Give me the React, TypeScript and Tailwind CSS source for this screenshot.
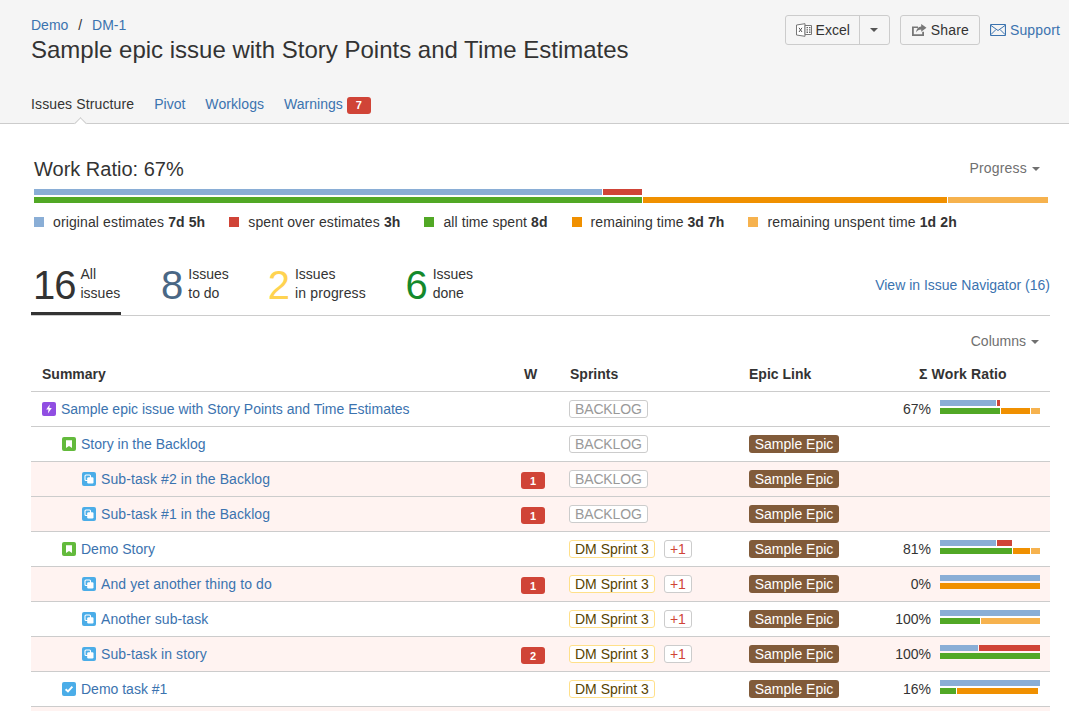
import type { ReactNode } from "react";

type Seg = { w: number; c: string };

const BLUE = "bg-[#8aaed6]";
const RED = "bg-[#d04437]";
const GREEN = "bg-[#51a825]";
const ORANGE = "bg-[#f09000]";
const LIGHT = "bg-[#f6b24e]";

type Row = {
  title: string;
  level: number;
  icon: "epic" | "story" | "subtask" | "task";
  warn?: number;
  sprint?: "backlog" | "dm" | "dm+";
  epic?: boolean;
  pct?: string;
  top?: Seg[];
  bottom?: Seg[];
};

const rows: Row[] = [
  {
    title: "Sample epic issue with Story Points and Time Estimates",
    level: 0,
    icon: "epic",
    sprint: "backlog",
    pct: "67%",
    top: [{ w: 56, c: BLUE }, { w: 3, c: RED }],
    bottom: [{ w: 60, c: GREEN }, { w: 29, c: ORANGE }, { w: 9, c: LIGHT }],
  },
  { title: "Story in the Backlog", level: 1, icon: "story", sprint: "backlog", epic: true },
  { title: "Sub-task #2 in the Backlog", level: 2, icon: "subtask", warn: 1, sprint: "backlog", epic: true },
  { title: "Sub-task #1 in the Backlog", level: 2, icon: "subtask", warn: 1, sprint: "backlog", epic: true },
  {
    title: "Demo Story",
    level: 1,
    icon: "story",
    sprint: "dm+",
    epic: true,
    pct: "81%",
    top: [{ w: 56, c: BLUE }, { w: 15, c: RED }],
    bottom: [{ w: 72, c: GREEN }, { w: 17, c: ORANGE }, { w: 9, c: LIGHT }],
  },
  {
    title: "And yet another thing to do",
    level: 2,
    icon: "subtask",
    warn: 1,
    sprint: "dm+",
    epic: true,
    pct: "0%",
    top: [{ w: 100, c: BLUE }],
    bottom: [{ w: 100, c: ORANGE }],
  },
  {
    title: "Another sub-task",
    level: 2,
    icon: "subtask",
    sprint: "dm+",
    epic: true,
    pct: "100%",
    top: [{ w: 100, c: BLUE }],
    bottom: [{ w: 40, c: GREEN }, { w: 59, c: LIGHT }],
  },
  {
    title: "Sub-task in story",
    level: 2,
    icon: "subtask",
    warn: 2,
    sprint: "dm+",
    epic: true,
    pct: "100%",
    top: [{ w: 38, c: BLUE }, { w: 61, c: RED }],
    bottom: [{ w: 100, c: GREEN }],
  },
  {
    title: "Demo task #1",
    level: 1,
    icon: "task",
    sprint: "dm",
    epic: true,
    pct: "16%",
    top: [{ w: 100, c: BLUE }],
    bottom: [{ w: 16, c: GREEN }, { w: 81, c: ORANGE }],
  },
];

function IssueIcon({ type }: { type: Row["icon"] }) {
  if (type === "epic") {
    return (
      <svg width="14" height="14" viewBox="0 0 14 14" className="shrink-0">
        <rect width="14" height="14" rx="2" fill="#904ee2" />
        <path d="M7.8 2.5 4.2 7.6h2.3L5.9 11.5l3.9-5.4H7.3z" fill="#fff" />
      </svg>
    );
  }
  if (type === "story") {
    return (
      <svg width="14" height="14" viewBox="0 0 14 14" className="shrink-0">
        <rect width="14" height="14" rx="2" fill="#63ba3c" />
        <path d="M4 3.2h6v7.8L7 8.9 4 11z" fill="#fff" />
      </svg>
    );
  }
  if (type === "task") {
    return (
      <svg width="14" height="14" viewBox="0 0 14 14" className="shrink-0">
        <rect width="14" height="14" rx="2" fill="#4bade8" />
        <path d="m3.6 7.2 2.4 2.3 4.4-4.8" fill="none" stroke="#fff" strokeWidth="1.9" />
      </svg>
    );
  }
  return (
    <svg width="14" height="14" viewBox="0 0 14 14" className="shrink-0">
      <rect width="14" height="14" rx="2" fill="#4bade8" />
      <rect x="3" y="3" width="5.5" height="5.5" rx="1" fill="none" stroke="#fff" strokeWidth="1.1" />
      <rect x="5.2" y="5.2" width="6.3" height="6.3" rx="1.2" fill="#fff" />
    </svg>
  );
}

function Bar({ segs, last }: { segs: Seg[]; last?: boolean }) {
  return (
    <div className={last ? "flex h-[6px] gap-px" : "flex h-[6px] gap-px mb-[2px]"}>
      {segs.map((s, i) => (
        <div key={i} className={`h-full ${s.c}`} style={{ width: s.w }} />
      ))}
    </div>
  );
}

function Sprint({ kind }: { kind: NonNullable<Row["sprint"]> }) {
  if (kind === "backlog") {
    return (
      <span className="h-[18px] px-[5px] flex items-center border border-[#cccccc] rounded-[3px] text-[#999999] bg-white tracking-[-0.15px]">
        BACKLOG
      </span>
    );
  }
  return (
    <>
      <span className="h-[18px] px-[5px] flex items-center border border-[#ffe08a] rounded-[3px] text-[#594300] bg-white">
        DM Sprint 3
      </span>
      {kind === "dm+" && (
        <span className="ml-[9px] h-[18px] px-[5px] flex items-center border border-[#cccccc] rounded-[3px] text-[#d04437] bg-white">
          +1
        </span>
      )}
    </>
  );
}

function TableRow({ row }: { row: Row }) {
  return (
    <div className={`h-[35px] flex items-center border-b border-[#cccccc] ${row.warn ? "bg-[#fff3f1]" : ""}`}>
      <div
        className={`w-[490px] shrink-0 flex items-center gap-[5px] text-[#3b73af] ${row.level === 2 ? "tracking-[0.1px]" : ""}`}
        style={{ paddingLeft: 11 + row.level * 20 }}
      >
        <IssueIcon type={row.icon} />
        <span>{row.title}</span>
      </div>
      <div className="w-[48px] shrink-0 flex justify-start">
        {row.warn && (
          <span className="mt-[3px] w-6 h-[17px] flex items-center justify-center rounded-[3px] bg-[#d04437] text-white text-[11px] font-bold">
            {row.warn}
          </span>
        )}
      </div>
      <div className="w-[180px] shrink-0 flex items-center">{row.sprint && <Sprint kind={row.sprint} />}</div>
      <div className="w-[142px] shrink-0">
        {row.epic && (
          <span className="inline-flex h-[18px] w-[90px] items-center justify-center rounded-[3px] bg-[#815b3a] text-white">
            Sample Epic
          </span>
        )}
      </div>
      <div className="w-[40px] shrink-0 text-right text-[#333333]">{row.pct}</div>
      <div className="w-[100px] ml-[9px] shrink-0 pb-[4px]">
        {row.top && <Bar segs={row.top} />}
        {row.bottom && <Bar segs={row.bottom} last />}
      </div>
    </div>
  );
}

function Legend({ color, label, value, tight }: { color: string; label: string; value: string; tight?: boolean }) {
  return (
    <div className="flex items-center mr-[24px]">
      <span className={`w-[10px] h-[10px] mr-[9px] ${color}`} />
      <span className={tight ? "tracking-[0.08px]" : "tracking-[0.12px]"}>
        {label} <b>{value}</b>
      </span>
    </div>
  );
}

function Stat({
  num,
  color,
  children,
  active,
  className = "mr-[40px]",
}: {
  num: string;
  color: string;
  children: ReactNode;
  active?: boolean;
  className?: string;
}) {
  return (
    <div className={`h-[62px] pt-[10px] flex items-start ${className} ${active ? "border-b-[3px] border-[#333333] w-[90px] pl-[2px]" : ""}`}>
      <span className={`text-[40px] leading-[52px] mt-[-4px] ${color} ${active ? "tracking-[-1px]" : ""}`}>{num}</span>
      <span className="leading-[19px] text-[14px] text-[#333333] mt-[2px] ml-[5px]">{children}</span>
    </div>
  );
}

function Caret() {
  return <span className="inline-block ml-[5px] align-middle border-x-[4px] border-t-[4px] border-x-transparent border-t-current" />;
}

export default function App() {
  return (
    <div className="h-[711px] overflow-hidden bg-white text-[14px] leading-[20px] text-[#333333] font-['Liberation_Sans',Arial,sans-serif]">
      <header className="relative h-[124px] bg-[#f5f5f5] border-b border-[#cccccc] pl-[31px] pr-[9px]">
        <div className="flex justify-between">
          <div className="pt-[15px]">
            <div className="text-[#3b73af] leading-[20px]">
              Demo <span className="text-[#333333] mx-[6px]">/</span> DM-1
            </div>
            <h1 className="text-[24px] leading-[30px] font-normal">Sample epic issue with Story Points and Time Estimates</h1>
          </div>
          <div className="flex items-center pt-[15px] h-[45px]">
            <div className="flex h-[30px] border border-[#cccccc] rounded-[3px] mr-[10px]">
              <button className="flex items-center gap-[4px] pl-[10px] pr-[9px] border-r border-[#cccccc]">
                <svg width="16" height="14" viewBox="0 0 16 14">
                  <path d="M.5 2 9 .7v12.6L.5 12z" fill="#fff" stroke="#777" />
                  <path d="M3 4.8 6 9M6 4.8 3 9" stroke="#555" fill="none" />
                  <path d="M9 2.5h6.5v9H9z" fill="#fff" stroke="#777" />
                  <path d="M10.5 4h1.5v1.3h-1.5zM13 4h1.5v1.3H13zM10.5 6.3h1.5v1.3h-1.5zM13 6.3h1.5v1.3H13zM10.5 8.6h1.5v1.3h-1.5zM13 8.6h1.5v1.3H13z" fill="#666" />
                </svg>
                Excel
              </button>
              <button className="w-[29px] flex items-center justify-center text-[#555555]">
                <span className="inline-block border-x-[4px] border-t-[4px] border-x-transparent border-t-current" />
              </button>
            </div>
            <button className="flex h-[30px] items-center gap-[4px] px-[10px] border border-[#cccccc] rounded-[3px] mr-[10px] tracking-[0.15px]">
              <svg width="16" height="14" viewBox="0 0 16 14">
                <path d="M1 3.5h6v1.6H2.8v6.2h8.4V8.7H13V13H1z" fill="#777" />
                <path d="M10.2 1 15.5 4.8l-5.3 3.9V6.4C8 6.4 6.2 7.4 5 9.6c.3-3.4 2.2-5.7 5.2-6z" fill="#777" />
              </svg>
              Share
            </button>
            <a className="flex items-center gap-[4px] text-[#3b73af] tracking-[0.15px]">
              <svg width="16" height="12" viewBox="0 0 16 12" fill="none" stroke="#3b73af">
                <rect x=".5" y=".5" width="15" height="11" rx="1" strokeWidth="1.2" />
                <path d="m1 1.5 7 5 7-5M1 10.5 6 5.5M15 10.5l-5-5" />
              </svg>
              Support
            </a>
          </div>
        </div>
        <nav className="flex gap-[20px] mt-[29px] items-center">
          <span className="tracking-[0.13px]">Issues Structure</span>
          <span className="text-[#3b73af]">Pivot</span>
          <span className="text-[#3b73af] tracking-[0.08px]">Worklogs</span>
          <span className="text-[#3b73af] flex items-center gap-[4px]">
            Warnings
            <span className="mt-[2px] w-6 h-[17px] flex items-center justify-center rounded-[3px] bg-[#d04437] text-white text-[11px] font-bold">7</span>
          </span>
        </nav>
        <span className="absolute left-[76px] bottom-[-5px] w-[9px] h-[9px] bg-white border-l border-t border-[#cccccc] rotate-45" />
      </header>

      <main className="pl-[31px] pr-[19px]">
        <div className="flex justify-between items-center pt-[25px] pl-[3px] pr-[10px] h-[65px]">
          <span className="text-[20px] leading-[28px]">Work Ratio: 67%</span>
          <span className="text-[#707070] tracking-[0.2px] mt-[-2px]">
            Progress
            <Caret />
          </span>
        </div>
        <div className="ml-[3px] mr-[2px]">
          <div className="flex h-[6px] gap-px mb-[2px]">
            <div className={`w-[568px] ${BLUE}`} />
            <div className={`w-[39px] ${RED}`} />
          </div>
          <div className="flex h-[6px] gap-px">
            <div className={`w-[608px] ${GREEN}`} />
            <div className={`w-[304px] ${ORANGE}`} />
            <div className={`w-[100px] ${LIGHT}`} />
          </div>
        </div>
        <div className="flex ml-[3px] mt-[9px] h-[20px]">
          <Legend color={BLUE} label="original estimates" value="7d 5h" />
          <Legend color={RED} label="spent over estimates" value="3h" />
          <Legend color={GREEN} label="all time spent" value="8d" tight />
          <Legend color={ORANGE} label="remaining time" value="3d 7h" tight />
          <Legend color={LIGHT} label="remaining unspent time" value="1d 2h" />
        </div>

        <div className="mt-[21px] h-[63px] flex justify-between border-b border-[#cccccc]">
          <div className="flex">
            <Stat num="16" color="text-[#333333]" active>
              All<br />issues
            </Stat>
            <Stat num="8" color="text-[#4a6785]" className="mr-[39px]">
              Issues<br />to do
            </Stat>
            <Stat num="2" color="text-[#ffd351]" className="mr-[39.5px]">
              Issues<br /><span className="tracking-[0.15px]">in progress</span>
            </Stat>
            <Stat num="6" color="text-[#14892c]">
              Issues<br />done
            </Stat>
          </div>
          <a className="text-[#3b73af] pt-[22px]">View in Issue Navigator (16)</a>
        </div>

        <div className="h-[25px] pt-[15px] pr-[11px] text-right text-[#707070] leading-[20px]">
          Columns
          <Caret />
        </div>
        <div className="mt-[16px] h-[35px] flex items-center border-b border-[#cccccc] font-bold">
          <div className="w-[493px] pl-[11px] shrink-0">Summary</div>
          <div className="w-[46px] shrink-0">W</div>
          <div className="w-[179px] shrink-0">Sprints</div>
          <div className="w-[170px] shrink-0">Epic Link</div>
          <div className="tracking-[0.15px]">Σ Work Ratio</div>
        </div>
        {rows.map((r) => (
          <TableRow key={r.title} row={r} />
        ))}
        <div className="h-[35px] bg-[#fff3f1]" />
      </main>
    </div>
  );
}
